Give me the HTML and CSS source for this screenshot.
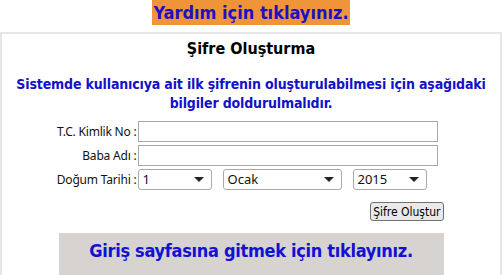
FILE: index.html
```html
<!DOCTYPE html>
<html lang="tr">
<head>
<meta charset="utf-8">
<title>Şifre Oluşturma</title>
<link rel="stylesheet" href="styles.css">
</head>
<body>
<div class="help-wrap"><a class="help" href="#">Yardım için tıklayınız.</a></div>
<div class="card">
  <h2 class="title">Şifre Oluşturma</h2>
  <p class="info">Sistemde kullanıcıya ait ilk şifrenin oluşturulabilmesi için aşağıdaki bilgiler doldurulmalıdır.</p>
  <div class="box">
    <div class="form">
      <label class="lbl">T.C. Kimlik No :</label>
      <input class="txt" type="text">
      <label class="lbl">Baba Adı :</label>
      <input class="txt" type="text">
      <label class="lbl">Doğum Tarihi :</label>
      <div class="dates">
        <div class="sel s-day">1<span class="arr"></span></div>
        <div class="sel s-mon">Ocak<span class="arr"></span></div>
        <div class="sel s-year">2015<span class="arr"></span></div>
      </div>
    </div>
    <div class="btn-row"><button class="btn" type="button">Şifre Oluştur</button></div>
    <a class="login" href="#">Giriş sayfasına gitmek için tıklayınız.</a>
  </div>
</div>
</body>
</html>
```
FILE: styles.css
```css
html, body { margin: 0; padding: 0; background: #fff; }
body { font-family: "DejaVu Sans Condensed", "DejaVu Sans", sans-serif; width: 502px; height: 275px; overflow: hidden; }
.help-wrap { text-align: center; height: 25px; }
.help { display: inline-block; background: #ef9439; color: #1d0fc4; font-weight: bold; font-size: 18px; line-height: 25px; padding: 0 1px; text-decoration: none; }
.card { margin-top: 7px; border: 2px solid #e6e6e6; height: 260px; box-sizing: border-box; }
.title { margin: 0; padding-top: 4px; text-align: center; font-size: 16px; line-height: 22px; color: #000; font-weight: bold; }
.info { margin: 15px 10px 0; text-align: center; color: #1212c8; font-size: 14px; letter-spacing: -0.15px; font-weight: bold; line-height: 19px; }
.box { width: 385px; margin: 8px auto 0; }
.form { display: grid; grid-template-columns: max-content 300px; justify-content: end; margin-right: 6px; row-gap: 3px; align-items: center; }
.lbl { font-family: "Noto Sans", "Open Sans", sans-serif; font-size: 12px; letter-spacing: -0.2px; text-align: right; color: #111; white-space: nowrap; padding-right: 1px; }
.txt { height: 21px; box-sizing: border-box; border: 1px solid #a9a9a9; margin: 0; padding: 0 3px; }
.dates { display: flex; gap: 11px; }
.sel { height: 21px; box-sizing: border-box; border: 1px solid #a9a9a9; border-radius: 3px; position: relative; font-family: "Noto Sans", "Open Sans", sans-serif; font-size: 13px; line-height: 19px; padding-left: 4px; color: #111; }
.s-day { width: 74px; }
.s-mon { width: 119px; }
.s-year { width: 74px; }
.arr { position: absolute; right: 7px; top: 7px; width: 0; height: 0; border-left: 5px solid transparent; border-right: 5px solid transparent; border-top: 5px solid #222; }
.btn-row { display: flex; justify-content: flex-end; margin-top: 12px; }
.btn { font-family: "DejaVu Sans Condensed", "DejaVu Sans", sans-serif; font-size: 12px; height: 19px; padding: 0 2px; border: 1px solid #707070; border-radius: 3px; background: #e9e9e9; color: #000; }
.login { display: block; margin-top: 12px; background: #d6d3d0; color: #1111d4; font-weight: bold; font-size: 18px; letter-spacing: -0.3px; text-align: center; text-decoration: none; height: 45px; line-height: 36px; }
```
